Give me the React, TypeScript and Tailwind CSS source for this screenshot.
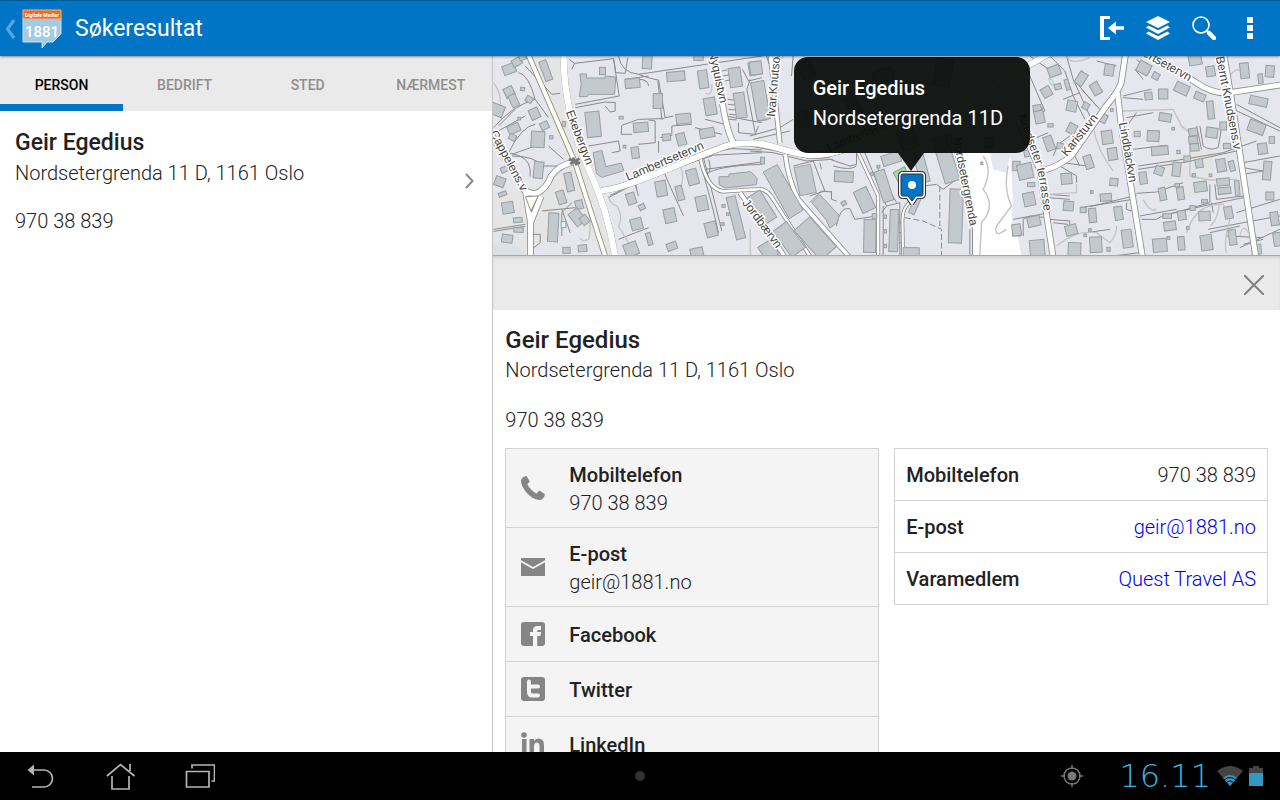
import React from "react";

// [center x, center y, width, height, rotation]
type Box = [number, number, number, number, number];

const westBoxes: Box[] = [
  [52, 39, 38, 28, -20], [75, 18, 28, 22, -30], [92, 4, 20, 16, -20], [162, 44, 22, 62, -20],
  [52, 108, 28, 30, -25], [66, 134, 22, 38, -25], [16, 162, 40, 34, 22], [92, 99, 12, 10, 10],
  [112, 130, 20, 18, 30], [128, 173, 28, 32, -25], [158, 209, 24, 22, -25], [66, 218, 36, 26, -25],
  [62, 244, 20, 18, 30], [138, 250, 40, 48, 3], [178, 244, 10, 10, 0], [140, 342, 28, 50, 6],
  [82, 188, 8, 8, 0], [216, 204, 10, 14, 10], [24, 377, 30, 28, 20], [32, 414, 24, 12, -20],
  [48, 455, 34, 34, -10], [38, 340, 22, 16, -25], [78, 492, 26, 14, -5], [80, 522, 28, 14, 3],
  [46, 548, 32, 24, 8], [232, 378, 22, 56, -12], [208, 424, 24, 40, -18], [262, 446, 22, 26, -15],
  [184, 514, 30, 86, 3], [256, 484, 34, 46, -38], [278, 492, 22, 26, -38], [224, 583, 22, 18, 0],
  [272, 577, 26, 20, -5], [332, 45, 18, 22, 0], [466, 16, 28, 44, 3], [422, 82, 44, 28, -5],
  [552, 61, 54, 28, -5], [620, 5, 28, 16, 0], [634, 70, 28, 54, -8], [730, 64, 36, 58, -8],
  [788, 38, 34, 38, -10], [498, 135, 28, 44, 0], [575, 188, 44, 30, -6], [655, 151, 34, 52, -10],
  [745, 148, 32, 76, -8], [802, 140, 26, 110, -10], [447, 214, 44, 28, -5], [524, 244, 24, 20, -5],
  [568, 250, 26, 36, -15], [646, 231, 44, 28, -10], [388, 185, 12, 8, 0], [398, 272, 8, 8, 0],
  [430, 290, 22, 34, -8], [304, 205, 42, 76, -6], [602, 363, 32, 46, -15], [508, 398, 32, 46, -10],
  [564, 411, 20, 44, -14], [418, 428, 26, 34, -18], [450, 453, 18, 16, -28], [534, 479, 34, 42, -12],
  [630, 442, 34, 44, -12], [658, 520, 34, 44, -14], [434, 504, 34, 34, -15], [472, 549, 14, 38, -15],
  [418, 580, 40, 40, -20], [540, 571, 30, 22, -20], [615, 590, 38, 28, -12], [732, 485, 28, 130, -14],
  [695, 450, 10, 8, 0], [708, 474, 8, 8, 0], [692, 504, 10, 8, 0], [800, 432, 26, 36, -30],
];

const midBoxes: Box[] = [
  [166, 372, 50, 86, -12], [282, 362, 56, 32, 3], [402, 390, 32, 96, -18], [424, 308, 56, 32, -18],
  [344, 432, 42, 70, -25], [360, 540, 36, 98, 1], [432, 524, 26, 126, 2], [36, 455, 46, 96, -32],
  [118, 550, 50, 96, -36], [196, 548, 62, 120, -42], [56, 584, 44, 50, -32], [32, 134, 40, 116, -10],
  [18, 36, 36, 40, -8], [516, 338, 30, 84, -15], [588, 310, 46, 140, -17], [618, 480, 40, 162, 2],
  [496, 446, 18, 58, 24], [484, 590, 48, 30, 0], [800, 330, 22, 28, 0], [800, 526, 24, 28, 0],
  [374, 480, 14, 14, 0], [406, 482, 8, 10, 0], [406, 526, 8, 10, 0], [406, 570, 8, 10, 0],
  [366, 354, 8, 8, 0], [386, 332, 8, 8, 0], [282, 442, 14, 12, -30], [38, 314, 12, 20, 0],
  [470, 240, 50, 80, -20], [580, 50, 50, 80, 10], [170, 40, 40, 50, -25], [160, 190, 30, 50, -10],
  [310, 150, 30, 60, -30], [400, 60, 60, 40, -20], [718, 260, 26, 30, 0], [696, 322, 6, 8, 0],
];

const eastBoxes: Box[] = [
  [133, 45, 36, 30, -20], [110, 108, 28, 30, -30], [144, 92, 20, 16, -15], [172, 86, 12, 32, -15],
  [88, 180, 28, 44, -12], [82, 156, 24, 18, -10], [186, 150, 30, 32, 12], [214, 68, 26, 40, 32],
  [258, 98, 26, 36, -30], [298, 42, 28, 34, 8], [228, 150, 18, 20, 30], [278, 186, 26, 26, 25],
  [186, 218, 26, 30, 28], [118, 262, 26, 44, -20], [122, 208, 16, 10, 0], [150, 270, 18, 18, 10],
  [236, 318, 24, 40, -18], [170, 368, 32, 32, -5], [46, 346, 44, 46, -12], [52, 292, 18, 20, -10],
  [58, 430, 34, 40, -12], [64, 386, 22, 12, 0], [72, 496, 38, 30, -12], [20, 522, 26, 34, -8],
  [82, 576, 44, 48, -5], [184, 522, 34, 30, -15], [176, 450, 30, 28, 5], [194, 580, 38, 40, 2],
  [220, 462, 18, 16, 0], [248, 478, 22, 42, -5], [258, 566, 36, 46, -3], [326, 472, 24, 40, -8],
  [352, 548, 30, 54, -8], [312, 378, 24, 22, 5], [288, 424, 34, 22, -5], [308, 294, 28, 36, -8],
  [292, 244, 32, 40, -8], [306, 162, 8, 8, 0], [402, 36, 38, 34, 28], [438, 60, 20, 20, 28],
  [416, 120, 22, 22, -5], [460, 114, 28, 30, 0], [516, 98, 42, 30, 25], [570, 122, 32, 22, 22],
  [602, 162, 20, 54, -6], [556, 12, 38, 30, -10], [602, 46, 26, 30, -10], [704, 44, 26, 46, -6],
  [752, 68, 14, 28, -5], [780, 46, 26, 34, 5], [746, 136, 54, 26, 12], [466, 184, 36, 24, 10],
  [430, 240, 36, 32, 3], [382, 234, 18, 16, 0], [450, 284, 50, 26, -5], [550, 228, 26, 22, -8],
  [550, 252, 26, 22, -5], [554, 274, 26, 22, -4], [606, 230, 34, 30, 8], [640, 210, 20, 24, 0],
  [652, 270, 22, 16, 0], [500, 340, 24, 42, 6], [448, 344, 26, 26, 20], [400, 366, 22, 36, -8],
  [532, 308, 20, 16, 0], [568, 322, 22, 26, -8], [634, 328, 28, 38, -10], [666, 330, 16, 30, -15],
  [740, 214, 50, 34, 20], [758, 278, 28, 32, -8], [786, 252, 16, 20, 0], [772, 344, 24, 56, 5],
  [572, 392, 38, 30, -8], [512, 412, 20, 38, -8], [458, 414, 20, 38, -10], [502, 388, 14, 10, 0],
  [640, 378, 38, 22, -6], [644, 404, 38, 20, -6], [682, 396, 14, 44, -5], [780, 420, 24, 24, 0],
  [584, 480, 34, 28, -3], [548, 456, 16, 14, 0], [584, 436, 18, 10, 0], [656, 470, 24, 36, -10],
  [516, 478, 24, 28, -8], [472, 480, 26, 14, 0], [480, 510, 36, 26, -8], [450, 568, 42, 40, -5],
  [514, 562, 20, 40, -5], [590, 560, 34, 46, -8], [668, 544, 22, 46, -8], [794, 488, 24, 40, -8],
  [740, 580, 28, 30, -5], [802, 550, 22, 40, -8], [476, 546, 8, 8, 0], [296, 580, 10, 12, 0],
  [246, 408, 8, 8, 0], [490, 218, 8, 8, 0], [506, 288, 10, 10, 0], [552, 358, 10, 10, 0],
  [602, 358, 8, 8, 0], [240, 522, 8, 8, 0], [226, 538, 8, 8, 0], [534, 516, 8, 8, 0],
];

const Buildings = ({ boxes }: { boxes: Box[] }) => (
  <g fill="#c3c9cc" stroke="#989fa2" strokeWidth="3">
    {boxes.map(([x, y, w, h, r], i) => (
      <rect
        key={i}
        x={x - w / 2}
        y={y - h / 2}
        width={w}
        height={h}
        transform={`rotate(${r} ${x} ${y})`}
      />
    ))}
  </g>
);

const Road = ({ d, width }: { d: string; width: number }) => (
  <g fill="none" strokeLinejoin="round">
    <path d={d} stroke="#8b8b8b" strokeWidth={width + 5} />
    <path d={d} stroke="#ffffff" strokeWidth={width} />
  </g>
);

// all roads share one coordinate space so junctions can be merged
const roads = [
  "M212 0C214 120 238 230 288 340C325 420 352 500 368 610",
  "M325 404C400 400 560 320 700 270Q722 262 770 262C830 258 870 290 950 298C1020 300 1090 270 1180 230L1500 90L1760 -60",
  "M662 0L690 150Q706 240 724 262",
  "M-10 225L92 400Q110 415 130 412Q160 400 175 360Q200 325 245 318",
  "M98 405L113 500V610M145 420L113 500",
  "M1898 -5L1885 80Q1878 105 1840 150L1735 300Q1700 330 1655 342",
  "M1874 110L1885 210L1950 610",
  "M1575 190L1640 340L1682 610",
  "M1950 -20L2110 80Q2160 115 2210 110L2370 86",
  "M2192 -10L2216 130L2290 610",
];

const MapRoads = () => (
  <g fill="none" strokeLinejoin="round">
    {roads.map((d) => (
      <path key={d} d={d} stroke="#8f8f8f" strokeWidth="20" />
    ))}
    {roads.map((d) => (
      <path key={d} d={d} stroke="#ffffff" strokeWidth="15" />
    ))}
    <path d={roads[0]} stroke="#ffffff" strokeWidth="19" />
    <path d={roads[1]} stroke="#ffffff" strokeWidth="18" />
  </g>
);

const labels: [string, number, number, number][] = [
  ["Ekebergvn", 73, 56, 69],
  ["Lambertsetervn", 135, 125, -23],
  ["Nyquistvn", 216, -4, 78],
  ["Cappelens.v", -3, 77, 62],
  ["Jordbærvn", 249, 147, 53],
  ["Ivar.Knutson", 282, 61, -85],
  ["Lambertsetervn", 336, 96, -23],
  ["Nordsetergrenda", 460, 82, 79],
  ["Karistuvn", 574, 101, -51],
  ["Lindbäckvn", 626, 67, 80],
  ["Bernt Knudsens.v", 723, 1, 79],
  ["Lambertsetervn", 623, -15, 29],
];

const StreetMap = () => (
  <svg
    viewBox="0 0 787 199"
    preserveAspectRatio="xMidYMid slice"
    className="block h-full w-full bg-[#e6e6ef]"
    role="img"
    aria-label="Kart"
  >
    <g transform="scale(.33333)">
      <path d="M100 0H215L370 597H330L235 470L120 597H0V420L100 400L230 330Z" fill="#e5e5e5" />
      <path d="M0 560Q60 550 100 597H0Z" fill="#dce1e8" />
      <path d="M2010 320L2110 280H2160V360L2100 430L2010 380Z" fill="#e4e4e4" />
      <path
        d="M1380 290H1492L1500 340L1540 350L1552 300L1560 420L1556 500L1575 540L1585 597H1440L1440 500L1415 380Z"
        fill="#ffffff"
      />
    </g>

    <g transform="translate(-1 0) scale(.33333)">
      <g fill="none" stroke="#8a8a8a" strokeWidth="3">
        <path d="M80 50Q110 55 130 130L170 185M100 30L180 115L205 112M5 215Q60 150 130 130M20 210L70 160M10 230L100 180M60 295L130 270M50 290Q90 210 130 205M55 292Q110 300 115 340V362M60 300Q130 300 150 330L200 330M170 270L215 310M5 520L100 505M5 526L100 511M150 465L250 455M240 440L210 470V540" />
        <path d="M232 10L248 22L365 8L382 120L250 145M248 22L240 40M365 8L372 50L400 52L408 5M250 155L340 138L370 140V165L355 168L340 150M380 0Q388 50 440 55L810 0M440 55Q480 70 500 72L520 185L510 190L498 75M400 70L470 60M470 90Q470 70 440 70M520 185L545 180M388 235L390 208L440 190L510 188M388 235H420M440 265L490 260V195L470 192M500 255V290M505 245L540 238V210L600 205M290 270L380 255L385 285L360 290M640 190L700 205M610 215L690 235M700 180L810 200M740 200V230L790 235L800 210" />
        <path d="M350 408L410 380L650 290L720 278L810 282M355 418L420 388L655 298L810 290M350 425Q480 350 660 300M620 305Q650 400 680 530M635 305L690 525M430 385L440 420M515 345L530 380L575 480M380 550L470 515M640 340L810 318M645 355Q670 330 810 325M430 380L435 400M650 310Q660 340 650 350M775 70L765 100L790 230M752 40L770 75L810 65M120 535H145V560L120 580M210 460L235 530" />
        <path d="M706 130L726 132M708 145L728 147M710 160L730 162M712 175L732 177M712 190L734 192M690 45L705 42M694 60L710 57M698 75L714 72" />
      </g>
      <path
        d="M350 420Q350 440 375 450Q395 480 380 510L410 560M290 460Q300 520 290 550Q270 560 265 545M5 80Q30 110 25 160M565 330Q580 360 565 400M640 110Q660 125 660 85M775 520V597"
        fill="none"
        stroke="#c4c4c4"
        strokeWidth="4"
      />
      <Buildings boxes={westBoxes} />
      <g fill="#c3c9cc" stroke="#989fa2" strokeWidth="3">
        <path d="M264 54H284V66H340V60L372 63L368 115H290L286 122H262L268 84Z" />
        <path d="M304 290L330 283L342 332L388 321L396 344L330 364L314 354Z" />
        <path d="M682 362H710L712 354L776 347L796 366L794 386L700 396L682 386Z" />
        <rect x="208" y="497" width="14" height="18" fill="#dff2f6" />
      </g>
    </g>

    <g transform="translate(257 0) scale(.33333)">
      <g fill="none" stroke="#8a8a8a" strokeWidth="3">
        <path d="M0 240L90 215L130 190M10 250L120 225M50 0L70 60M125 60L130 0M0 270L80 285L180 308L240 305M0 285L70 290L170 315L250 310M240 310L300 330L320 325V290M250 330Q300 345 320 330M130 330L190 315L225 405L180 420M180 440L215 405L245 408M245 405V430L260 435M260 510Q270 450 300 458L315 490L380 480M380 330L440 440M345 290L410 450L395 470M400 450V597M450 440V597M210 320L215 340" />
        <path d="M465 485L520 495L575 520V597M570 390V510" strokeDasharray="18 8" />
        <path d="M520 390L560 385L580 400L620 370L635 350M600 230L640 400L668 520V597M380 460L390 480M660 520V597M410 450L450 440M380 500H374M380 530H374M380 560H374M448 500H454M448 530H454M448 560H454" />
      </g>
      <path
        d="M700 300Q730 340 700 400Q740 450 695 500L690 597M775 330Q760 400 785 450L740 510Q730 550 770 520M100 0L70 60"
        fill="none"
        stroke="#c0c0c0"
        strokeWidth="4"
      />
      <path d="M430 350L465 332L475 362L445 378Z" fill="#a8d5a8" stroke="#7ba57b" strokeWidth="3" />
      <Road d="M106 295Q115 370 145 430L300 605" width={11} />
      <Road d="M325 290L385 420V610" width={7} />
      <Road d="M-150 300Q-130 400 -80 406L20 400Q50 395 70 430L180 600" width={8} />
      <Road d="M460 610L458 500Q456 460 478 440" width={6} />
      <Road d="M62 0L90 262" width={11} />
      <Road d="M-30 410L50 520L110 610" width={11} />
      <Buildings boxes={midBoxes} />
      <path d="M40 348L82 326L160 462L118 488Z" fill="#c3c9cc" stroke="#989fa2" strokeWidth="3" />
      <path d="M186 440L210 416L268 478L262 500L240 516L228 490Z" fill="#c3c9cc" stroke="#989fa2" strokeWidth="3" />
    </g>

    <g transform="translate(517 0) scale(.33333)">
      <g fill="none" stroke="#8a8a8a" strokeWidth="3">
        <path d="M40 10L60 60L105 165L95 170M120 0L165 45L190 120L225 190M170 0L190 70L240 180M60 0L130 50M160 130L210 110M260 15L320 30M195 75L260 150M215 100L270 160M80 245L115 230M130 300L145 265L180 240M150 330L200 360V380M160 320L230 330M190 290L210 330M340 120L400 105L425 100M340 125L400 130M380 10L420 50M375 40L400 70M350 185L430 170M355 205L380 170M370 280L470 268M385 330L520 310L640 290L740 255M385 340L530 318L680 285M570 210L580 270Q600 285 625 275L635 215M560 210L575 280" />
        <path d="M210 455L370 430M240 452L380 418M380 412L440 408L520 380M350 440V460L380 470M390 480L500 460M395 490H440L460 478L580 450L700 425M460 480L600 440V385M605 440L610 470M615 385L620 430L700 420M595 520L700 500L810 480M600 530L690 510M680 470L810 430M650 540L760 545M690 575L810 520M700 565L760 550M680 145L810 215M660 155L810 225M700 320L810 300M700 335L760 345M700 355L760 345M40 490L60 480L110 485M10 490L120 470M115 415L180 420M115 425L180 430M120 490L180 495V520M130 500L175 505M40 490V540M230 530L300 520M310 600L390 590" />
      </g>
      <path
        d="M250 210Q260 280 310 345M170 0Q180 30 240 5M340 165L490 160L515 210L540 230V360L600 372L680 370M200 385V410L120 415M140 570Q200 520 260 530L300 560Q320 540 320 510M530 530Q560 440 640 445L660 490Q640 560 650 590M400 430Q420 470 440 460M660 60Q680 30 700 50M630 440Q620 500 600 510M690 540Q700 500 715 530"
        fill="none"
        stroke="#c4c4c4"
        strokeWidth="4"
      />
      <Buildings boxes={eastBoxes} />
      <path d="M116 68L126 70L132 84L124 88Z" fill="#d8efec" stroke="#8fb4ae" strokeWidth="2" />
    </g>

    <g transform="scale(.33333)">
      <MapRoads />
      <path d="M98 422L136 420L114 466Z" fill="#fffff0" stroke="#8f8f8f" strokeWidth="3" />
      <path d="M106 -5L246 318L340 610" fill="none" stroke="#8b8b8b" strokeWidth="17" />
      <path d="M106 -5L246 318L340 610" fill="none" stroke="#fffff6" strokeWidth="12" />
      <path d="M228 310L262 322M232 324L260 308M240 305L252 328" stroke="#777" strokeWidth="8" />
    </g>

    <g
      fill="#444"
      stroke="#ffffff"
      strokeWidth="3"
      strokeLinejoin="round"
      paintOrder="stroke"
      fontFamily="Liberation Sans, sans-serif"
      fontSize="12"
    >
      {labels.map(([name, x, y, angle]) => (
        <text key={`${name}${x}`} transform={`translate(${x} ${y}) rotate(${angle})`}>
          {name}
        </text>
      ))}
      <path id="terrasse" d="M525 60L542 106Q547 120 552 165" fill="none" stroke="none" />
      <text>
        <textPath href="#terrasse">Nordseter terrasse</textPath>
      </text>
    </g>
  </svg>
);

const Logo = () => (
  <svg viewBox="0 0 40 40" className="h-10 w-10" aria-hidden="true">
    <path d="M1 9H39V25L31 33H25L20 39V33H1Z" fill="#a3cbe4" stroke="#c5dff0" strokeWidth="1" />
    <path d="M1 1H39V10H1Z" fill="#f26a21" stroke="#f7b48c" strokeWidth="1" />
    <text x="20" y="8" textAnchor="middle" fontSize="5" fontWeight="700" fill="#fff" fontFamily="Roboto, sans-serif">
      Digitale Medier
    </text>
    <text x="20" y="28" textAnchor="middle" fontSize="15" fontWeight="500" fill="#fff" fontFamily="Roboto, sans-serif">
      1881
    </text>
  </svg>
);

const PhoneIcon = () => (
  <svg viewBox="0 0 24 24" className="h-6 w-6" fill="#858585">
    <path d="M5.5 0L8.8 5.4L6.2 8.2Q9.5 14.2 15.4 17.4L18.4 14.6L24 18.2Q22.6 24 18.3 24Q11 23.2 5 16Q0 9.7 0 4.6Q.6 .9 5.5 0Z" />
  </svg>
);

const MailIcon = () => (
  <svg viewBox="0 0 24 24" className="h-6 w-6" fill="#858585">
    <path d="M0 3H24V5.3L12 12L0 5.3ZM0 7.3L12 14L24 7.3V21H0Z" />
  </svg>
);

const FacebookIcon = () => (
  <svg viewBox="0 0 24 24" className="h-6 w-6">
    <rect width="24" height="24" rx="3" fill="#858585" />
    <path d="M12 24V14H9V10H12V8Q12 4 16.5 4H20V8H17.5Q16.2 8 16.2 9.3V10H20L19.5 14H16.2V24Z" fill="#f4f4f4" />
  </svg>
);

const TwitterIcon = () => (
  <svg viewBox="0 0 24 24" className="h-6 w-6">
    <rect width="24" height="24" rx="3" fill="#858585" />
    <path
      d="M8 4.5V15Q8 18.5 11.5 18.5H17M8 9.5H17"
      fill="none"
      stroke="#f4f4f4"
      strokeWidth="4"
      strokeLinecap="round"
    />
  </svg>
);

const LinkedInIcon = () => (
  <svg viewBox="0 0 24 24" className="h-6 w-6" fill="#858585">
    <circle cx="3" cy="3" r="2.8" />
    <path d="M1 7H5.5V24H1ZM8.5 7H13V9Q14.5 6.5 17.5 6.5Q23 6.5 23 13V24H18.5V14Q18.5 10.500 16 10.500Q13 10.500 13 14V24H8.5Z" />
  </svg>
);

const tabs = ["PERSON", "BEDRIFT", "STED", "NÆRMEST"];

const actions = [
  { title: "Mobiltelefon", value: "970 38 839", icon: <PhoneIcon /> },
  { title: "E-post", value: "geir@1881.no", icon: <MailIcon /> },
  { title: "Facebook", icon: <FacebookIcon /> },
  { title: "Twitter", icon: <TwitterIcon /> },
  { title: "LinkedIn", icon: <LinkedInIcon /> },
];

const Header = () => (
  <header className="relative z-10 flex h-14 shrink-0 items-center border-t border-[#005a96] bg-[#0075c6] shadow-[0_1px_2px_rgba(0,0,0,0.4)]">
    <button type="button" aria-label="Tilbake" className="flex items-center pl-1">
      <svg viewBox="0 0 18 20" className="h-5 w-[18px]" fill="none" stroke="#5aa6dc" strokeWidth="3">
        <path d="M10 1L3.5 10L10 19" />
      </svg>
      <Logo />
    </button>
    <h1 className="pl-[13px] text-[23px] leading-7 text-white">Søkeresultat</h1>
    <nav className="ml-auto flex items-center gap-[22px] pr-[18px] pb-[2px] text-white">
      <button type="button" aria-label="Logg inn">
        <svg viewBox="0 0 24 24" className="h-6 w-6" fill="currentColor">
          <path d="M0 0H10V3H4V21H10V24H0ZM8 12L16 5.5V10.3H24V13.7H16V18.5Z" />
        </svg>
      </button>
      <button type="button" aria-label="Kartlag">
        <svg viewBox="0 0 24 24" className="h-6 w-6" fill="currentColor">
          <path d="M12 0L24 6L12 12L0 6ZM2.5 9.5L12 14.3L21.5 9.5L24 11.5L12 18L0 11.5ZM2.5 15.5L12 20.3L21.5 15.5L24 17.5L12 24L0 17.5Z" />
        </svg>
      </button>
      <button type="button" aria-label="Søk">
        <svg viewBox="0 0 24 24" className="h-6 w-6" fill="none" stroke="currentColor">
          <circle cx="9" cy="9" r="8" strokeWidth="1.6" />
          <path d="M14.5 14.5L17 17" strokeWidth="2" />
          <path d="M17 17L22 22" strokeWidth="4.5" strokeLinecap="round" />
        </svg>
      </button>
      <button type="button" aria-label="Meny">
        <svg viewBox="0 0 24 24" className="h-6 w-6" fill="currentColor">
          <path d="M9 1H15V7H9ZM9 9H15V15H9ZM9 17H15V23H9Z" />
        </svg>
      </button>
    </nav>
  </header>
);

const ResultList = () => (
  <section className="flex min-w-0 flex-col bg-white">
    <div role="tablist" className="grid h-[55px] shrink-0 grid-cols-4 bg-[#eaeaea] text-sm font-medium">
      {tabs.map((tab, i) => (
        <button
          key={tab}
          type="button"
          role="tab"
          aria-selected={i === 0}
          className={
            i === 0
              ? "border-b-[7px] border-[#0075c6] pt-[10px] text-black"
              : "border-b-[7px] border-transparent pt-[10px] text-[#8f8f8f]"
          }
        >
          {tab}
        </button>
      ))}
    </div>
    <a href="#person" className="flex items-center justify-between py-4 pr-[17px] pl-[15px]">
      <div className="text-xl leading-7 font-light">
        <h2 className="text-[23px] leading-8 font-medium">Geir Egedius</h2>
        <p>Nordsetergrenda 11 D, 1161 Oslo</p>
        <p className="mt-5">970 38 839</p>
      </div>
      <svg viewBox="0 0 12 16" className="h-4 w-3" fill="none" stroke="#8a8a8a" strokeWidth="2">
        <path d="M3 1L9.5 8L3 15" />
      </svg>
    </a>
  </section>
);

const Callout = () => (
  <div className="absolute top-px left-1/2 ml-[-93px] text-xl text-white">
    <div className="flex h-24 w-[236px] flex-col justify-center rounded-[14px] bg-[#0a0e0b]/95 pb-1 pl-[19px] leading-[30px]">
      <p className="font-medium">Geir Egedius</p>
      <p>Nordsetergrenda 11D</p>
    </div>
    <svg viewBox="0 0 32 52" className="ml-[102px] block h-[52px] w-8" aria-hidden="true">
      <path d="M2 0H28L15 18Z" fill="#0a0e0b" fillOpacity=".95" />
      <path
        d="M7 21H25Q27 21 27 23V41Q27 43 25 43H20L16 49L12 43H7Q5 43 5 41V23Q5 21 7 21Z"
        fill="#0075c6"
        stroke="#2b333b"
        strokeWidth="6"
      />
      <path
        d="M7 21H25Q27 21 27 23V41Q27 43 25 43H20L16 49L12 43H7Q5 43 5 41V23Q5 21 7 21Z"
        fill="#0075c6"
        stroke="#ffffff"
        strokeWidth="4"
      />
      <path
        d="M7 21H25Q27 21 27 23V41Q27 43 25 43H20L16 48L12 43H7Q5 43 5 41V23Q5 21 7 21Z"
        fill="#0075c6"
        stroke="#2b333b"
        strokeWidth="1"
      />
      <circle cx="16" cy="32" r="4" fill="#fff" />
    </svg>
  </div>
);

const Detail = () => (
  <section id="person" className="flex min-h-0 min-w-0 flex-col border-l border-[#c4c4c4] bg-white">
    <div className="relative h-[199px] shrink-0 overflow-hidden">
      <StreetMap />
      <Callout />
    </div>
    <div className="flex h-[55px] shrink-0 items-center justify-end border-t border-[#a8a8a8] bg-[#eaeaea] pt-1 pr-4 shadow-[inset_0_2px_2px_rgba(0,0,0,0.1)]">
      <button type="button" aria-label="Lukk">
        <svg viewBox="0 0 20 20" className="h-5 w-5" fill="none" stroke="#808080" strokeWidth="2">
          <path d="M0 0L20 20M20 0L0 20" />
        </svg>
      </button>
    </div>
    <div className="min-h-0 flex-1 overflow-hidden px-3 pt-[14px] text-xl leading-7 font-light">
      <h2 className="text-2xl leading-8 font-medium">Geir Egedius</h2>
      <p>Nordsetergrenda 11 D, 1161 Oslo</p>
      <p className="mt-[22px]">970 38 839</p>
      <div className="mt-[14px] grid grid-cols-2 items-start gap-[15px]">
        <ul className="border border-[#d2d2d2] bg-[#f4f4f4]">
          {actions.map(({ title, value, icon }) => (
            <li key={title} className="border-b border-[#d2d2d2]">
              <button
                type="button"
                className={
                  value
                    ? "flex h-[78px] w-full items-center gap-6 pl-[15px] text-left"
                    : "flex h-[54px] w-full items-center gap-6 pl-[15px] text-left"
                }
              >
                {icon}
                <span className="pt-[2px]">
                  <span className="block font-medium">{title}</span>
                  {value && <span className="block">{value}</span>}
                </span>
              </button>
            </li>
          ))}
        </ul>
        <table className="w-full border-collapse border border-[#d2d2d2]">
          <tbody>
            <tr className="h-[52px] border-b border-[#d2d2d2]">
              <th className="pl-[11px] text-left font-medium">Mobiltelefon</th>
              <td className="pr-[11px] text-right">970 38 839</td>
            </tr>
            <tr className="h-[52px] border-b border-[#d2d2d2]">
              <th className="pl-[11px] text-left font-medium">E-post</th>
              <td className="pr-[11px] text-right">
                <a href="mailto:geir@1881.no" className="text-[#0000ee]">geir@1881.no</a>
              </td>
            </tr>
            <tr className="h-[52px]">
              <th className="pl-[11px] text-left font-medium">Varamedlem</th>
              <td className="pr-[11px] text-right">
                <a href="#quest" className="text-[#0000ee]">Quest Travel AS</a>
              </td>
            </tr>
          </tbody>
        </table>
      </div>
    </div>
  </section>
);

const SystemBar = () => (
  <footer className="grid h-12 shrink-0 grid-cols-[1fr_auto_1fr] items-center bg-black">
    <div className="flex items-center gap-[50px] pl-[25px]">
      <button type="button" aria-label="Tilbake">
        <svg viewBox="0 0 30 30" className="h-[30px] w-[30px]" fill="none" stroke="#b4b4b4" strokeWidth="1.7">
          <path d="M8 9H19A8.5 8.5 0 0 1 19 26H7" />
          <path d="M9 3.5V14.5L2.5 9Z" fill="#b4b4b4" stroke="none" />
        </svg>
      </button>
      <button type="button" aria-label="Hjem">
        <svg viewBox="0 0 30 30" className="h-[30px] w-[30px]" fill="none" stroke="#b4b4b4" strokeWidth="1.7">
          <path d="M2 15L15.5 3.5L29.5 15M7 15V28H24V15M25 10V3" />
        </svg>
      </button>
      <button type="button" aria-label="Nylige apper">
        <svg viewBox="0 0 30 30" className="h-[30px] w-[30px]" fill="none" stroke="#b4b4b4" strokeWidth="1.7">
          <path d="M1.5 10.5H24V26H1.5ZM7 7.5V4H29.5V20H26.5" />
        </svg>
      </button>
    </div>
    <span className="h-[10px] w-[10px] rounded-full bg-[#333]" />
    <div className="flex items-center justify-end pr-[17px]">
      <svg viewBox="0 0 22 22" className="h-[22px] w-[22px]" fill="none" stroke="#777" strokeWidth="1.5">
        <circle cx="11" cy="11" r="8" />
        <circle cx="11" cy="11" r="4.5" fill="#777" stroke="none" />
        <path d="M11 0V4M11 18V22M0 11H4M18 11H22" />
      </svg>
      <time className="w-32 text-right font-['DejaVu_Sans'] text-[32px] leading-9 font-extralight text-[#33b5e5]">
        16.11
      </time>
      <svg viewBox="0 0 26 20" className="ml-[6px] h-5 w-[26px]">
        <path d="M0 5Q13 -5 26 5L13 20Z" fill="#444" />
        <path d="M6 12Q13 6 20 12L13 20Z" fill="#3399c4" />
        <path d="M7 14Q13 9 19 14M9 17Q13 13 17 17" fill="none" stroke="#000" strokeWidth="1" />
      </svg>
      <svg viewBox="0 0 14 20" className="ml-[6px] h-5 w-[14px]">
        <path d="M4 0H10V2H14V20H0V2H4Z" fill="#444" />
        <path d="M0 7H14V20H0Z" fill="#3399c4" />
      </svg>
    </div>
  </footer>
);

export default function App() {
  return (
    <div className="flex h-screen flex-col overflow-hidden bg-white font-['Roboto',sans-serif] text-[#222]">
      <Header />
      <main className="grid min-h-0 flex-1 grid-cols-[5fr_8fr]">
        <ResultList />
        <Detail />
      </main>
      <SystemBar />
    </div>
  );
}
